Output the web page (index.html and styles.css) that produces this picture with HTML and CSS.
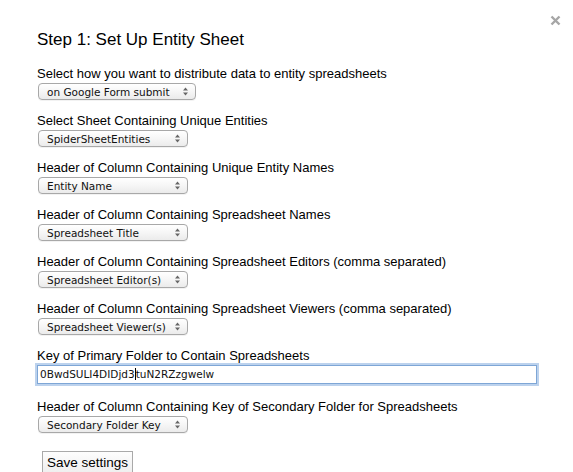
FILE: index.html
```html
<!DOCTYPE html>
<html lang="en">
<head>
    <meta charset="UTF-8">
    <title>Step 1: Set Up Entity Sheet</title>
    <link rel="stylesheet" href="styles.css">
</head>
<body>
    <div class="dialog">
        <span class="close-btn">
            <svg width="11" height="11" viewBox="0 0 11 11"><path d="M1.5 1.5 L9.5 9.5 M9.5 1.5 L1.5 9.5" stroke="#a6a6a6" stroke-width="2.4"/></svg>
        </span>
        <h1>Step 1: Set Up Entity Sheet</h1>

        <div class="field">
            <label>Select how you want to distribute data to entity spreadsheets</label>
            <div class="select wide"><span>on Google Form submit</span><svg class="arrows" width="5" height="9" viewBox="0 0 5 9"><path d="M0 3.5 L2.5 0.5 L5 3.5 Z M0 5.5 L2.5 8.5 L5 5.5 Z" fill="#666"/></svg></div>
        </div>

        <div class="field">
            <label>Select Sheet Containing Unique Entities</label>
            <div class="select"><span>SpiderSheetEntities</span><svg class="arrows" width="5" height="9" viewBox="0 0 5 9"><path d="M0 3.5 L2.5 0.5 L5 3.5 Z M0 5.5 L2.5 8.5 L5 5.5 Z" fill="#666"/></svg></div>
        </div>

        <div class="field">
            <label>Header of Column Containing Unique Entity Names</label>
            <div class="select"><span>Entity Name</span><svg class="arrows" width="5" height="9" viewBox="0 0 5 9"><path d="M0 3.5 L2.5 0.5 L5 3.5 Z M0 5.5 L2.5 8.5 L5 5.5 Z" fill="#666"/></svg></div>
        </div>

        <div class="field">
            <label>Header of Column Containing Spreadsheet Names</label>
            <div class="select"><span>Spreadsheet Title</span><svg class="arrows" width="5" height="9" viewBox="0 0 5 9"><path d="M0 3.5 L2.5 0.5 L5 3.5 Z M0 5.5 L2.5 8.5 L5 5.5 Z" fill="#666"/></svg></div>
        </div>

        <div class="field">
            <label>Header of Column Containing Spreadsheet Editors (comma separated)</label>
            <div class="select"><span>Spreadsheet Editor(s)</span><svg class="arrows" width="5" height="9" viewBox="0 0 5 9"><path d="M0 3.5 L2.5 0.5 L5 3.5 Z M0 5.5 L2.5 8.5 L5 5.5 Z" fill="#666"/></svg></div>
        </div>

        <div class="field">
            <label>Header of Column Containing Spreadsheet Viewers (comma separated)</label>
            <div class="select"><span>Spreadsheet Viewer(s)</span><svg class="arrows" width="5" height="9" viewBox="0 0 5 9"><path d="M0 3.5 L2.5 0.5 L5 3.5 Z M0 5.5 L2.5 8.5 L5 5.5 Z" fill="#666"/></svg></div>
        </div>

        <div class="field key-field">
            <label>Key of Primary Folder to Contain Spreadsheets</label>
            <div class="text-input">0BwdSULI4DIDjd3<span class="caret"></span>tuN2RZzgwelw</div>
        </div>

        <div class="field">
            <label>Header of Column Containing Key of Secondary Folder for Spreadsheets</label>
            <div class="select"><span>Secondary Folder Key</span><svg class="arrows" width="5" height="9" viewBox="0 0 5 9"><path d="M0 3.5 L2.5 0.5 L5 3.5 Z M0 5.5 L2.5 8.5 L5 5.5 Z" fill="#666"/></svg></div>
        </div>

        <button class="save-btn">Save settings</button>
    </div>
</body>
</html>
```

FILE: styles.css
```css
body {
    margin: 0;
    padding: 0;
    background: #fff;
    font-family: 'Liberation Sans', Arial, sans-serif;
    color: #000;
}

.dialog {
    position: relative;
    padding: 30px 0 0 37px;
    height: 442px;
    overflow: hidden;
}

.close-btn {
    position: absolute;
    top: 15px;
    right: 12px;
    display: block;
    width: 11px;
    height: 11px;
}

.close-btn svg {
    display: block;
}

h1 {
    margin: 0 0 16px 0;
    font-size: 17px;
    font-weight: normal;
    line-height: 20px;
}

.field {
    display: flex;
    flex-direction: column;
    align-items: flex-start;
    margin-bottom: 13px;
}

.field label {
    font-size: 13px;
    line-height: 15px;
    margin-bottom: 2px;
}

.select {
    box-sizing: border-box;
    display: flex;
    align-items: center;
    justify-content: space-between;
    width: 150px;
    height: 17px;
    margin-left: 1px;
    padding: 0 7px 0 8px;
    border: 1px solid #a8a8a8;
    border-radius: 4px;
    background: linear-gradient(#ffffff, #f6f6f6 50%, #ebebeb);
    box-shadow: 0 1px 0 rgba(0, 0, 0, 0.05);
    font-family: 'DejaVu Sans', sans-serif;
    font-size: 10.5px;
    color: #111;
}

.select.wide {
    width: 158px;
}

.arrows {
    display: block;
    flex: none;
}

.key-field {
    margin-bottom: 15px;
}

.text-input {
    box-sizing: border-box;
    width: 500px;
    height: 19px;
    padding: 0 2px;
    border: 1px solid #7ea6d6;
    box-shadow: 0 0 0 2px #bcd2ed;
    font-family: 'DejaVu Sans', sans-serif;
    font-size: 10.5px;
    line-height: 17px;
    color: #111;
    white-space: nowrap;
}

.caret {
    display: inline-block;
    width: 1px;
    height: 12px;
    vertical-align: -2px;
    background: #000;
}

.save-btn {
    margin: 5px 0 0 5px;
    padding: 3px 4px 5px 4px;
    border: 1px solid #a9a9a9;
    border-radius: 0;
    background: linear-gradient(#fdfdfd, #ededed);
    font-family: 'Liberation Sans', Arial, sans-serif;
    font-size: 13.5px;
    color: #000;
}
```
